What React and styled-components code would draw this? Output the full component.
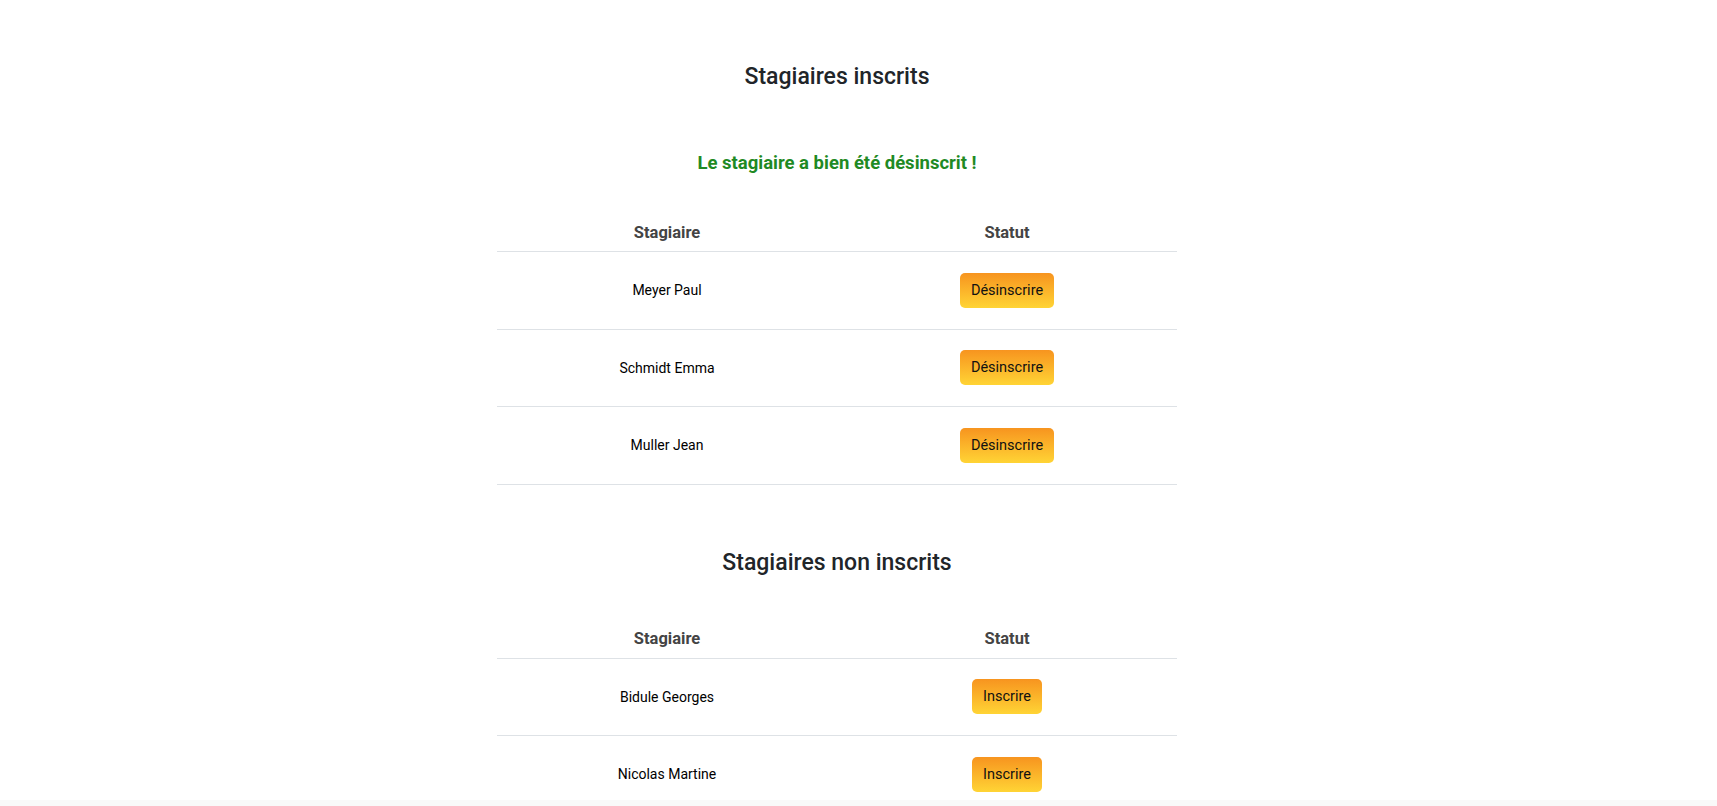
import React from "react";
import styled, { createGlobalStyle } from "styled-components";

const Global = createGlobalStyle`
  html, body { margin: 0; padding: 0; background: #ffffff; }
  body { font-family: Roboto, "Noto Sans", sans-serif; color: #000; }
`;

const Page = styled.main`
  display: flex;
  flex-direction: column;
  align-items: center;
  padding: 63px 43px 40px 0;
  min-height: 100vh;
  box-sizing: border-box;
`;

const Section = styled.section`
  display: flex;
  flex-direction: column;
  align-items: center;
  width: 680px;
  margin-top: ${(p) => p.$top || 0}px;
`;

const Title = styled.h2`
  margin: 0;
  font-size: 23px;
  line-height: 28px;
  font-weight: 500;
  color: #212529;
`;

const Message = styled.p`
  margin: 61px 0 0;
  font-size: 18.5px;
  line-height: 22px;
  font-weight: 700;
  color: #1f8a24;
`;

const Table = styled.table`
  width: 100%;
  border-collapse: collapse;
  table-layout: fixed;
  margin-top: ${(p) => p.$top}px;
`;

const Th = styled.th`
  height: 38px;
  padding: 0;
  font-size: 16.5px;
  font-weight: 700;
  color: #444;
  text-align: center;
  border-bottom: 1px solid #dee2e6;
`;

const Td = styled.td`
  height: 76.5px;
  padding: 0;
  font-size: 14px;
  color: #000;
  text-align: center;
  border-bottom: 1px solid #dee2e6;
`;

const ActionButton = styled.button`
  height: 35px;
  padding: 0 11px;
  border: none;
  border-radius: 5px;
  background: linear-gradient(180deg, #f7941f 0%, #ffd435 100%);
  font-family: inherit;
  font-size: 14.5px;
  color: #111;
  cursor: pointer;
`;

const ScrollTrack = styled.div`
  position: fixed;
  left: 0;
  right: 0;
  bottom: 0;
  height: 6px;
  background: #f9f9f9;
`;

const inscrits = ["Meyer Paul", "Schmidt Emma", "Muller Jean"];
const nonInscrits = ["Bidule Georges", "Nicolas Martine"];

function TraineeTable({ rows, label, top }) {
  return (
    <Table $top={top}>
      <thead>
        <tr>
          <Th>Stagiaire</Th>
          <Th>Statut</Th>
        </tr>
      </thead>
      <tbody>
        {rows.map((name) => (
          <tr key={name}>
            <Td>{name}</Td>
            <Td>
              <ActionButton>{label}</ActionButton>
            </Td>
          </tr>
        ))}
      </tbody>
    </Table>
  );
}

export default function App() {
  return (
    <>
      <Global />
      <Page>
        <Section>
          <Title>Stagiaires inscrits</Title>
          <Message>Le stagiaire a bien été désinscrit !</Message>
          <TraineeTable rows={inscrits} label="Désinscrire" top={39} />
        </Section>
        <Section $top={64}>
          <Title>Stagiaires non inscrits</Title>
          <TraineeTable rows={nonInscrits} label="Inscrire" top={43} />
        </Section>
      </Page>
      <ScrollTrack />
    </>
  );
}
